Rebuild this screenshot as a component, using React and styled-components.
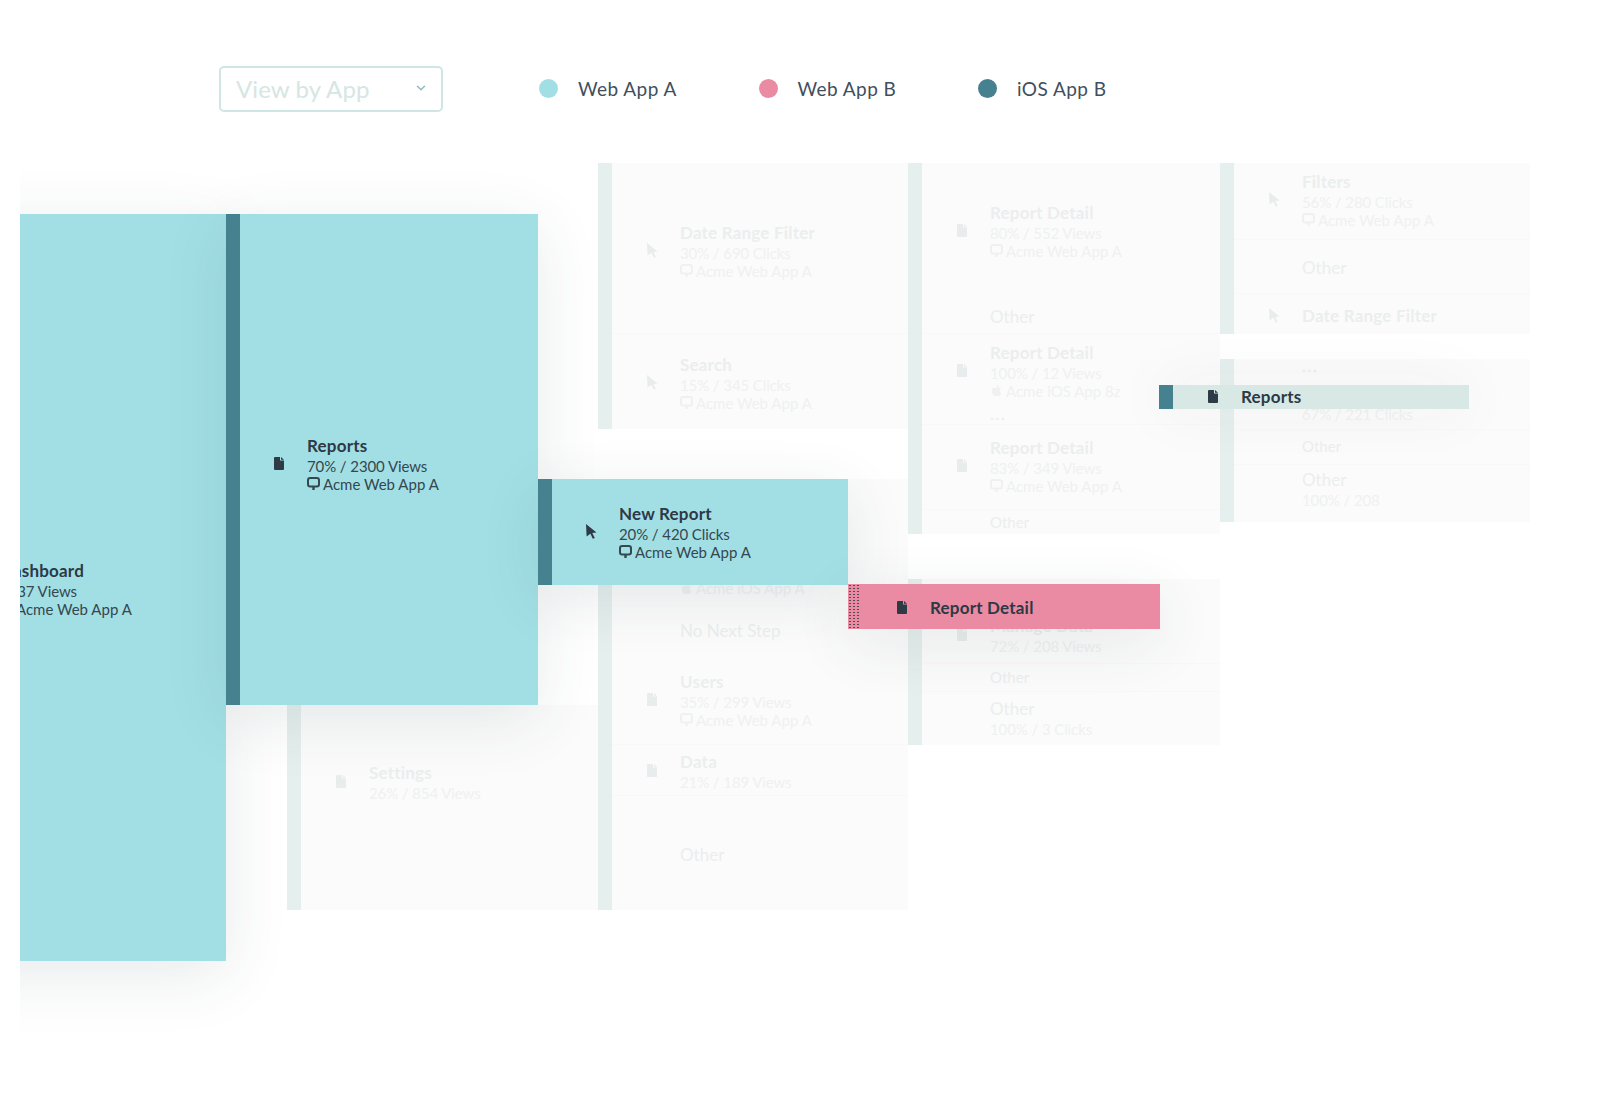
import React from "react";
import styled, { createGlobalStyle } from "styled-components";
import { FaApple } from "react-icons/fa";
import { ChevronDown } from "lucide-react";

const CANVAS_LEFT = 20;
const CANVAS_TOP = 150;

const GlobalStyle = createGlobalStyle`
  html, body {
    margin: 0;
    background: #fff;
    font-family: "Lato", "Open Sans", sans-serif;
    overflow: hidden;
  }
`;

const Page = styled.div`
  width: 1600px;
  height: 1111px;
  overflow: hidden;
`;

const Toolbar = styled.div`
  height: ${CANVAS_TOP}px;
  box-sizing: border-box;
  padding: 66px 0 0 219px;
  display: flex;
  align-items: flex-start;
`;

const Select = styled.div`
  width: 224px;
  height: 46px;
  box-sizing: border-box;
  border: 2px solid #cfe6e4;
  border-radius: 5px;
  padding: 0 13px 2px 15px;
  display: flex;
  align-items: center;
  justify-content: space-between;
  font-size: 24px;
  letter-spacing: 0.1px;
  color: #d5e6e3;
  margin-right: 96px;
`;

const Legend = styled.div`
  display: flex;
  height: 44px;
  align-items: center;
`;

const LegendItem = styled.div`
  width: 219.5px;
  display: flex;
  align-items: center;
  font-size: 19px;
  letter-spacing: 0.45px;
  color: #3f4f5c;
`;

const Dot = styled.span`
  width: 19px;
  height: 19px;
  border-radius: 50%;
  background: ${p => p.$color};
  margin-right: 20px;
`;

const Canvas = styled.div`
  position: relative;
  margin-left: ${CANVAS_LEFT}px;
  height: ${1111 - CANVAS_TOP}px;
  overflow: hidden;
`;

const Panel = styled.div`
  position: absolute;
  left: ${p => p.$x - CANVAS_LEFT}px;
  top: ${p => p.$y - CANVAS_TOP}px;
  width: ${p => p.$w}px;
  height: ${p => p.$h}px;
  box-sizing: border-box;
  border-left: ${p => p.$barWidth || 14}px solid ${p => p.$bar};
  background: ${p => p.$bg};
  box-shadow: ${p => p.$shadow || "none"};
  z-index: ${p => (p.$active ? 2 : 1)};
  color: ${p => (p.$active ? "#35474f" : "#eff1f1")};
  --title: ${p => (p.$active ? "#2d3945" : "#ebeeee")};
`;

const FadedPanel = styled(Panel).attrs({ $bar: "#e5efed", $bg: "#fbfbfb" })`
  overflow: hidden;
`;

// the dark dotted strip on the pink node
const DottedBar = styled.div`
  position: absolute;
  left: -12px;
  top: 0;
  width: 12px;
  height: 100%;
  background-image: radial-gradient(#3a3f4a 0.8px, transparent 1px);
  background-size: 4px 3px;
  opacity: 0.85;
`;

const Row = styled.div`
  height: ${p => p.$h}px;
  box-sizing: border-box;
  padding: ${p => p.$top}px 0 0 ${p => p.$pad || 35}px;
  border-bottom: ${p => (p.$line ? "1px solid #f8f8f8" : "none")};
`;

const RowBody = styled.div`
  display: flex;
  align-items: center;
`;

const IconSlot = styled.div`
  width: 33px;
  flex: none;
  display: flex;
  color: ${p => (p.$active ? "#2f3a47" : "#e8ecec")};
`;

const Title = styled.div`
  font-size: 17px;
  line-height: 22px;
  font-weight: 700;
  letter-spacing: 0.2px;
  color: var(--title);
  white-space: nowrap;
`;

const Plain = styled.div`
  font-size: ${p => (p.$small ? 15 : 17)}px;
  line-height: ${p => (p.$small ? 18 : 22)}px;
  color: var(--title);
  white-space: nowrap;
`;

const Stat = styled.div`
  font-size: 15px;
  line-height: 18px;
  letter-spacing: -0.1px;
  white-space: nowrap;
`;

const AppLine = styled.div`
  font-size: 15px;
  line-height: 18px;
  white-space: nowrap;
  display: flex;
  align-items: center;
  gap: 3px;
`;

const More = styled.div`
  font-size: 15px;
  line-height: 8px;
  font-weight: 900;
  letter-spacing: 2px;
  color: var(--title);
`;

const PageIcon = () => (
  <svg width="10" height="13" viewBox="0 0 10 13" fill="currentColor">
    <path d="M0 1a1 1 0 0 1 1-1h5v3.5h4V12a1 1 0 0 1-1 1H1a1 1 0 0 1-1-1zM7 0l3 2.7H7z" />
  </svg>
);

const CursorIcon = () => (
  <svg width="11" height="15" viewBox="0 0 11 15" fill="currentColor">
    <path d="M0 0l10.5 8.4-4.2.5 2.5 5-2 .9-2.4-5.1L.6 12.6z" />
  </svg>
);

const MonitorIcon = () => (
  <svg width="13" height="14" viewBox="0 0 13 14" fill="none" stroke="currentColor">
    <rect x="1" y="1" width="11" height="8.5" rx="2.2" strokeWidth="2" />
    <path d="M6.5 10v3" strokeWidth="2.4" />
  </svg>
);

const rowIcons = { page: <PageIcon />, cursor: <CursorIcon /> };

// one line in a column: an optional icon and the title, stat and app lines
const FlowRow = ({ row, active, pad }) => (
  <Row $h={row.h} $top={row.top} $line={row.line} $pad={pad}>
    <RowBody>
      <IconSlot $active={active}>{rowIcons[row.icon]}</IconSlot>
      <div>
        {row.title && <Title>{row.title}</Title>}
        {row.plain && <Plain $small={row.small}>{row.plain}</Plain>}
        {row.more && <More>...</More>}
        {row.stat && <Stat>{row.stat}</Stat>}
        {row.app === "web" && <AppLine><MonitorIcon />Acme Web App A</AppLine>}
        {row.app === "ios" && <AppLine><FaApple size={13} />{row.appName}</AppLine>}
      </div>
    </RowBody>
  </Row>
);

const fadedColumns = [
  { x: 287, y: 705, w: 311, h: 205, rows: [
    { h: 205, top: 56.5, icon: "page", title: "Settings", stat: "26% / 854 Views" },
  ] },
  { x: 598, y: 163, w: 310, h: 266, rows: [
    { h: 171, top: 58.5, line: true, icon: "cursor", title: "Date Range Filter", stat: "30% / 690 Clicks", app: "web" },
    { h: 95, top: 19.5, icon: "cursor", title: "Search", stat: "15% / 345 Clicks", app: "web" },
  ] },
  { x: 598, y: 479, w: 310, h: 431, rows: [
    { h: 121, top: 100, app: "ios", appName: "Acme iOS App A" },
    { h: 50, top: 19.5, plain: "No Next Step" },
    { h: 95, top: 20.5, line: true, icon: "page", title: "Users", stat: "35% / 299 Views", app: "web" },
    { h: 51, top: 5.5, line: true, icon: "page", title: "Data", stat: "21% / 189 Views" },
    { h: 114, top: 47.5, plain: "Other" },
  ] },
  { x: 908, y: 163, w: 312, h: 371, rows: [
    { h: 132, top: 38.5, icon: "page", title: "Report Detail", stat: "80% / 552 Views", app: "web" },
    { h: 39, top: 10.5, line: true, plain: "Other" },
    { h: 73, top: 7.5, icon: "page", title: "Report Detail", stat: "100% / 12 Views", app: "ios", appName: "Acme iOS App 8z" },
    { h: 18, top: 3, line: true, more: true },
    { h: 85, top: 11.5, line: true, icon: "page", title: "Report Detail", stat: "83% / 349 Views", app: "web" },
    { h: 24, top: 3, plain: "Other", small: true },
  ] },
  { x: 908, y: 579, w: 312, h: 166, rows: [
    { h: 85, top: 35.5, line: true, icon: "page", title: "Manage Data", stat: "72% / 208 Views" },
    { h: 28, top: 4, line: true, plain: "Other", small: true },
    { h: 53, top: 5.5, plain: "Other", stat: "100% / 3 Clicks" },
  ] },
  { x: 1220, y: 163, w: 310, h: 171, rows: [
    { h: 77, top: 7.5, line: true, icon: "cursor", title: "Filters", stat: "56% / 280 Clicks", app: "web" },
    { h: 54, top: 16.5, line: true, plain: "Other" },
    { h: 40, top: 10.5, icon: "cursor", title: "Date Range Filter" },
  ] },
  { x: 1220, y: 359, w: 310, h: 163, rows: [
    { h: 17, top: 3, more: true },
    { h: 54, top: 29, line: true, stat: "67% / 221 Clicks" },
    { h: 35, top: 7, line: true, plain: "Other", small: true },
    { h: 57, top: 3.5, plain: "Other", stat: "100% / 208" },
  ] },
];

const softShadow = "0 14px 60px rgba(50, 60, 70, 0.11)";

const activeNodes = [
  { x: -82, y: 214, w: 308, h: 747, bg: "#a2dfe5", bar: "#a2dfe5", shadow: softShadow,
    row: { h: 747, top: 345.5, title: "Dashboard", stat: "3237 Views", app: "web", icon: "page" } },
  { x: 226, y: 214, w: 312, h: 491, bg: "#a2dfe5", bar: "#46818f", pad: 34, shadow: softShadow,
    row: { h: 491, top: 220.5, icon: "page", title: "Reports", stat: "70% / 2300 Views", app: "web" } },
  { x: 538, y: 479, w: 310, h: 106, bg: "#a2dfe5", bar: "#46818f", pad: 34, shadow: softShadow,
    row: { h: 106, top: 23.5, icon: "cursor", title: "New Report", stat: "20% / 420 Clicks", app: "web" } },
  { x: 848, y: 584, w: 312, h: 45, bg: "#ea8ba3", bar: "#ea8ba3", barWidth: 12, pad: 37, dotted: true, shadow: softShadow,
    row: { h: 45, top: 12.5, icon: "page", title: "Report Detail" } },
  { x: 1159, y: 385, w: 310, h: 24, bg: "#d8e8e5", bar: "#46818f", shadow: "0 0 60px rgba(50, 60, 70, 0.07)",
    row: { h: 24, top: 0.5, icon: "page", title: "Reports" } },
];

const legend = [
  { name: "Web App A", color: "#a2dfe5" },
  { name: "Web App B", color: "#ea8ba3" },
  { name: "iOS App B", color: "#46818f" },
];

export default function App() {
  return (
    <Page>
      <GlobalStyle />
      <Toolbar>
        <Select>
          View by App
          <ChevronDown size={14} color="#8fbcc0" strokeWidth={2.5} />
        </Select>
        <Legend>
          {legend.map(item => (
            <LegendItem key={item.name}>
              <Dot $color={item.color} />
              {item.name}
            </LegendItem>
          ))}
        </Legend>
      </Toolbar>
      <Canvas>
        {fadedColumns.map(col => (
          <FadedPanel key={col.x + "-" + col.y} $x={col.x} $y={col.y} $w={col.w} $h={col.h}>
            {col.rows.map((row, i) => <FlowRow key={i} row={row} />)}
          </FadedPanel>
        ))}
        {activeNodes.map(node => (
          <Panel
            key={node.x}
            $active
            $x={node.x}
            $y={node.y}
            $w={node.w}
            $h={node.h}
            $bg={node.bg}
            $bar={node.bar}
            $barWidth={node.barWidth}
            $shadow={node.shadow}
          >
            {node.dotted && <DottedBar />}
            <FlowRow row={node.row} active pad={node.pad} />
          </Panel>
        ))}
      </Canvas>
    </Page>
  );
}
